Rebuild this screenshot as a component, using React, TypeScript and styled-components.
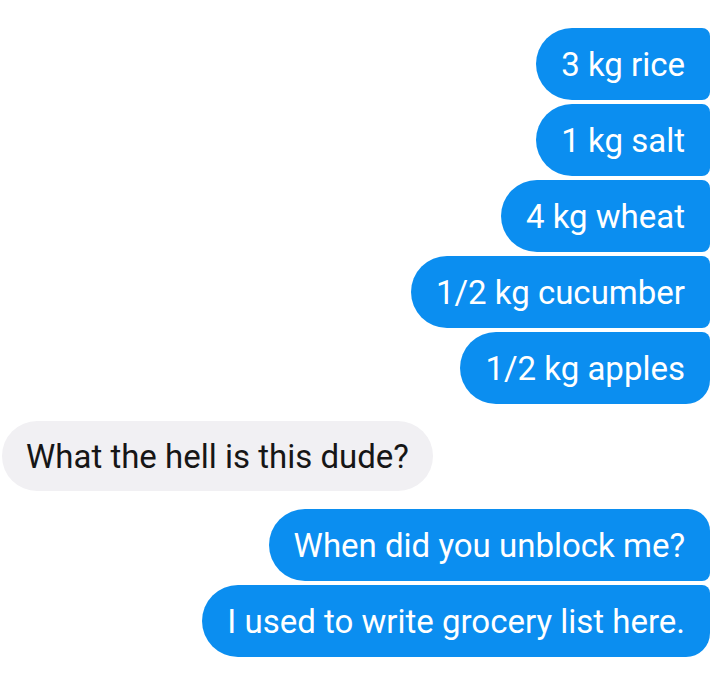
import React from "react";
import styled, { createGlobalStyle, css } from "styled-components";

const Global = createGlobalStyle`
  html, body { margin: 0; padding: 0; background: #ffffff; }
  body { font-family: Roboto, "Liberation Sans", Arial, sans-serif; }
`;

const Thread = styled.div`
  display: flex;
  flex-direction: column;
  padding: 28px 10px 0 2px;
  width: 720px;
  box-sizing: border-box;
`;

const Group = styled.div<{ $side: "in" | "out"; $mt: number }>`
  display: flex;
  flex-direction: column;
  gap: 4px;
  margin-top: ${(p) => p.$mt}px;
  align-items: ${(p) => (p.$side === "out" ? "flex-end" : "flex-start")};
`;

type Pos = "first" | "middle" | "last" | "single";

const Bubble = styled.div<{ $side: "in" | "out"; $pos: Pos; $topSmall?: boolean }>`
  box-sizing: border-box;
  height: 72px;
  padding: 0 25px 0 25px;
  display: flex;
  align-items: center;
  font-size: 33px;
  white-space: nowrap;
  ${(p) =>
    p.$side === "out"
      ? css`
          background: #0b8ef0;
          color: #ffffff;
          border-radius: 36px
            ${p.$pos === "first" || p.$pos === "single" ? (p.$topSmall ? "8px" : "22px") : "8px"}
            ${p.$pos === "last" || p.$pos === "single" ? "24px" : "8px"} 36px;
        `
      : css`
          background: #f1f0f3;
          color: #161616;
          height: 70px;
          padding: 0 24px;
          border-radius: 35px;
        `}
`;

const outgoing1 = ["3 kg rice", "1 kg salt", "4 kg wheat", "1/2 kg cucumber", "1/2 kg apples"];
const outgoing2 = ["When did you unblock me?", "I used to write grocery list here."];

const posOf = (i: number, n: number): Pos =>
  n === 1 ? "single" : i === 0 ? "first" : i === n - 1 ? "last" : "middle";

export default function App() {
  return (
    <>
      <Global />
      <Thread>
        <Group $side="out" $mt={0}>
          {outgoing1.map((t, i) => (
            <Bubble key={t} $side="out" $pos={posOf(i, outgoing1.length)} $topSmall>
              {t}
            </Bubble>
          ))}
        </Group>
        <Group $side="in" $mt={17}>
          <Bubble $side="in" $pos="single">What the hell is this dude?</Bubble>
        </Group>
        <Group $side="out" $mt={18}>
          {outgoing2.map((t, i) => (
            <Bubble key={t} $side="out" $pos={posOf(i, outgoing2.length)}>
              {t}
            </Bubble>
          ))}
        </Group>
      </Thread>
    </>
  );
}
